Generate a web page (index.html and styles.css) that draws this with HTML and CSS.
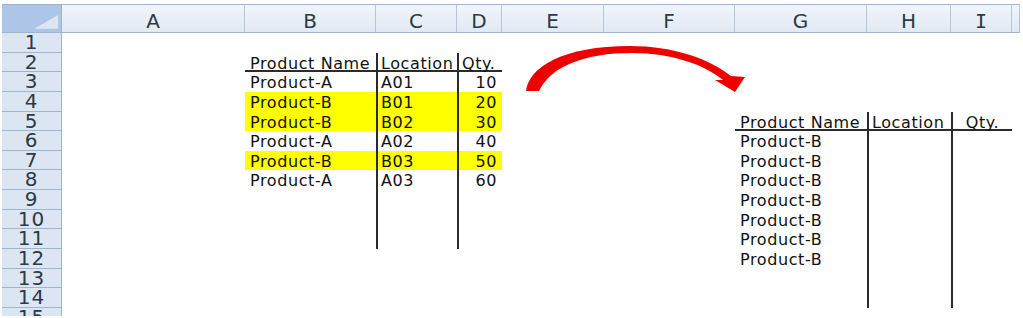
FILE: index.html
```html
<!DOCTYPE html>
<html>
<head>
<meta charset="utf-8">
<link rel="stylesheet" href="styles.css">
</head>
<body>
<div class="sheet">
  <div class="grid">
    <!-- header row -->
    <div class="ch corner"><svg class="tri" width="60" height="27" viewBox="0 0 60 27"><polygon points="33,24 57,24 57,10" fill="#dde7f4"/></svg></div>
    <div class="ch">A</div><div class="ch">B</div><div class="ch">C</div><div class="ch">D</div><div class="ch">E</div><div class="ch">F</div><div class="ch">G</div><div class="ch">H</div><div class="ch"><span class="serif-i">I</span></div><div class="ch"></div>
    <!-- 1 -->
    <div class="rh">1</div><div></div><div></div><div></div><div></div><div></div><div></div><div></div><div></div><div></div><div></div>
    <!-- 2 -->
    <div class="rh">2</div><div></div>
    <div class="c ul">Product Name</div><div class="c ul vl">Location</div><div class="c ul vl">Qty.</div>
    <div></div><div></div><div></div><div></div><div></div><div></div>
    <!-- 3 -->
    <div class="rh">3</div><div></div>
    <div class="c">Product-A</div><div class="c vl">A01</div><div class="c vl num">10</div>
    <div></div><div></div><div></div><div></div><div></div><div></div>
    <!-- 4 -->
    <div class="rh">4</div><div></div>
    <div class="c hl">Product-B</div><div class="c vl hl">B01</div><div class="c vl num hl">20</div>
    <div></div><div></div><div></div><div></div><div></div><div></div>
    <!-- 5 -->
    <div class="rh">5</div><div></div>
    <div class="c hl">Product-B</div><div class="c vl hl">B02</div><div class="c vl num hl">30</div>
    <div></div><div></div>
    <div class="c ul">Product Name</div><div class="c ul vl">Location</div><div class="c ul vl ctr">Qty.</div><div></div>
    <!-- 6 -->
    <div class="rh">6</div><div></div>
    <div class="c">Product-A</div><div class="c vl">A02</div><div class="c vl num">40</div>
    <div></div><div></div>
    <div class="c">Product-B</div><div class="c vl"></div><div class="c vl"></div><div></div>
    <!-- 7 -->
    <div class="rh">7</div><div></div>
    <div class="c hl">Product-B</div><div class="c vl hl">B03</div><div class="c vl num hl">50</div>
    <div></div><div></div>
    <div class="c">Product-B</div><div class="c vl"></div><div class="c vl"></div><div></div>
    <!-- 8 -->
    <div class="rh">8</div><div></div>
    <div class="c">Product-A</div><div class="c vl">A03</div><div class="c vl num">60</div>
    <div></div><div></div>
    <div class="c">Product-B</div><div class="c vl"></div><div class="c vl"></div><div></div>
    <!-- 9 -->
    <div class="rh">9</div><div></div>
    <div class="c"></div><div class="c vl"></div><div class="c vl"></div>
    <div></div><div></div>
    <div class="c">Product-B</div><div class="c vl"></div><div class="c vl"></div><div></div>
    <!-- 10 -->
    <div class="rh">10</div><div></div>
    <div class="c"></div><div class="c vl"></div><div class="c vl"></div>
    <div></div><div></div>
    <div class="c">Product-B</div><div class="c vl"></div><div class="c vl"></div><div></div>
    <!-- 11 -->
    <div class="rh">11</div><div></div>
    <div class="c"></div><div class="c vl"></div><div class="c vl"></div>
    <div></div><div></div>
    <div class="c">Product-B</div><div class="c vl"></div><div class="c vl"></div><div></div>
    <!-- 12 -->
    <div class="rh">12</div><div></div>
    <div></div><div></div><div></div>
    <div></div><div></div>
    <div class="c">Product-B</div><div class="c vl"></div><div class="c vl"></div><div></div>
    <!-- 13 -->
    <div class="rh">13</div><div></div>
    <div></div><div></div><div></div>
    <div></div><div></div>
    <div class="c"></div><div class="c vl"></div><div class="c vl"></div><div></div>
    <!-- 14 -->
    <div class="rh">14</div><div></div>
    <div></div><div></div><div></div>
    <div></div><div></div>
    <div class="c"></div><div class="c vl"></div><div class="c vl"></div><div></div>
    <!-- 15 -->
    <div class="rh">15</div><div></div><div></div><div></div><div></div><div></div><div></div><div></div><div></div><div></div><div></div>
  </div>
  <svg class="arrow" width="1023" height="318" viewBox="0 0 1023 318">
    <path d="M526,91 C529,67 563,46 630,46 C672,46 708,58 731,76 L745,77 L735,92 L715,80 L723,80 C705,65 672,53 632,53 C585,53 551,66 539,91 Z" fill="#ee0000"/>
  </svg>
</div>
</body>
</html>
```

FILE: styles.css
```css
html, body {
  margin: 0;
  padding: 0;
  background: #ffffff;
}

.sheet {
  position: relative;
  width: 1023px;
  height: 316px;
  overflow: hidden;
  padding: 4px 0 0 2px;
  box-sizing: border-box;
  background: #ffffff;
}

.grid {
  display: grid;
  grid-template-columns: 60px 183px 131px 81px 45px 102px 131px 132px 84px 61px 8px;
  grid-template-rows: 29px repeat(15, 19.64px);
}

.grid > div {
  box-sizing: border-box;
  min-width: 0;
}

.ch {
  background: linear-gradient(#f1f5fa, #e1e9f3);
  border-top: 1px solid #9fb5cf;
  border-bottom: 1px solid #9fb5cf;
  border-right: 1px solid #b3c6dc;
  font-family: "DejaVu Sans", Verdana, sans-serif;
  font-size: 20px;
  line-height: 33px;
  color: #2c3947;
  text-align: center;
  overflow: hidden;
}

.serif-i {
  font-family: "DejaVu Sans Mono", monospace;
}

.corner {
  background: #adc5e7;
  border-right: 1px solid #9fb5cf;
  display: flex;
  align-items: flex-end;
  justify-content: flex-end;
}

.tri {
  display: block;
}

.rh {
  background: #dce6f3;
  border-right: 1px solid #9fb5cf;
  border-bottom: 1px solid #9fb5cf;
  font-family: "DejaVu Sans", Verdana, sans-serif;
  font-size: 20px;
  letter-spacing: 1px;
  line-height: 19px;
  color: #2c3947;
  text-align: center;
}

.c {
  font-family: "DejaVu Sans", Verdana, sans-serif;
  font-size: 16px;
  letter-spacing: 0.6px;
  line-height: 21px;
  color: #111111;
  padding-left: 5px;
  white-space: nowrap;
}

.vl {
  border-left: 2px solid #2b2b2b;
  padding-left: 3px;
}

.ul {
  border-bottom: 2px solid #2b2b2b;
}

.hl {
  background: #ffff00;
}

.num {
  text-align: right;
  padding-right: 5px;
}

.ctr {
  text-align: center;
  padding-left: 0;
}

.arrow {
  position: absolute;
  left: 0;
  top: 0;
  pointer-events: none;
}
```
